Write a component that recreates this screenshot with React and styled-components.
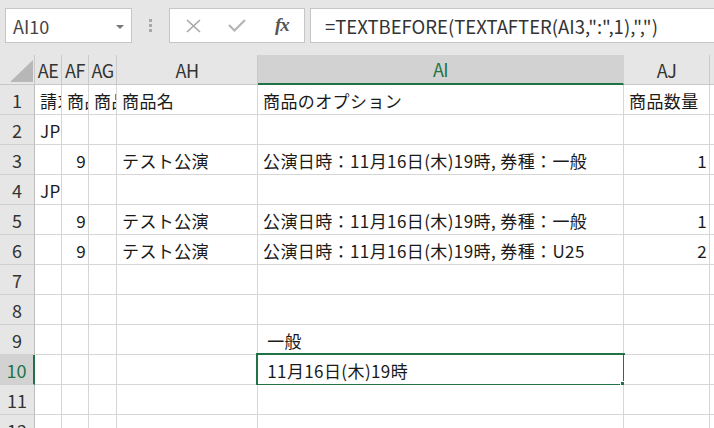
import React from 'react';
import styled, { createGlobalStyle } from 'styled-components';

const GlobalStyle = createGlobalStyle`
  html, body {
    margin: 0;
    padding: 0;
    background: #ffffff;
  }
  body {
    font-family: 'Noto Sans CJK JP', 'Noto Sans', sans-serif;
  }
`;

const GREEN = '#217346';
const GRID = '#d6d6d6';

const Window = styled.div`
  width: 714px;
  height: 428px;
  overflow: hidden;
  display: flex;
  flex-direction: column;
  background: #e6e6e6;
`;

// name box + formula bar
const Toolbar = styled.div`
  height: 55px;
  flex: none;
  display: flex;
  align-items: flex-start;
  padding: 8px 0 0 5px;
  box-sizing: border-box;
`;

const Field = styled.div`
  height: 35px;
  box-sizing: border-box;
  background: #ffffff;
  border: 1px solid #c6c6c6;
  display: flex;
  align-items: center;
  flex: none;
`;

const NameBox = styled(Field)`
  width: 127px;
  padding: 0 7px 0 7px;
  justify-content: space-between;
  font-size: 18px;
  color: #444;
`;

const DropArrow = styled.span`
  width: 0;
  height: 0;
  border-left: 4px solid transparent;
  border-right: 4px solid transparent;
  border-top: 4px solid #777;
  margin-top: 2px;
`;

const Grip = styled.div`
  width: 37px;
  height: 35px;
  flex: none;
  display: flex;
  flex-direction: column;
  align-items: center;
  justify-content: center;
  gap: 2px;

  span {
    width: 3px;
    height: 3px;
    background: #a8a8a8;
  }
`;

const ButtonBox = styled(Field)`
  width: 136px;
  padding-left: 1px;
`;

const ToolButton = styled.div`
  width: 45px;
  height: 100%;
  display: flex;
  align-items: center;
  justify-content: center;
  color: ${(p) => p.$color || '#a6a6a6'};
`;

const Fx = styled.span`
  font-family: 'Liberation Serif', 'DejaVu Serif', serif;
  font-style: italic;
  font-weight: bold;
  font-size: 19px;
  color: #555;
  letter-spacing: -1px;
  margin-top: -1px;
`;

const FormulaInput = styled(Field)`
  flex: 1;
  margin-left: 5px;
  padding-left: 14px;
  font-size: 18.5px;
  color: #333;
  white-space: pre;
  border-right: none;
`;

// worksheet grid
const Sheet = styled.div`
  flex: 1;
  display: grid;
  grid-template-columns: 35px 27px 27px 28px 141px 366px 86px 1fr;
  grid-auto-rows: 30px;
  overflow: hidden;
  font-size: 17px;
`;

const Corner = styled.div`
  position: relative;
  border-right: 1px solid #c8c8c8;
  border-bottom: 1px solid #c8c8c8;
  background: #e6e6e6;

  &::after {
    content: '';
    position: absolute;
    right: 1px;
    bottom: 2px;
    width: 0;
    height: 0;
    border-left: 23px solid transparent;
    border-bottom: 22px solid #b7b7b7;
  }
`;

const ColHead = styled.div`
  box-sizing: border-box;
  display: flex;
  align-items: center;
  justify-content: center;
  overflow: hidden;
  white-space: nowrap;
  font-size: 18px;
  background: ${(p) => (p.$active ? '#d2d2d2' : '#e6e6e6')};
  color: ${(p) => (p.$active ? GREEN : '#333')};
  border-right: 1px solid ${(p) => (p.$active ? '#d2d2d2' : '#cacaca')};
  border-bottom: ${(p) => (p.$active ? `2px solid ${GREEN}` : '1px solid #c8c8c8')};
  letter-spacing: -0.5px;
`;

const RowHead = styled.div`
  box-sizing: border-box;
  display: flex;
  align-items: center;
  justify-content: center;
  font-size: 18px;
  background: ${(p) => (p.$active ? '#d2d2d2' : '#e6e6e6')};
  color: ${(p) => (p.$active ? GREEN : '#333')};
  border-right: ${(p) => (p.$active ? `2px solid ${GREEN}` : '1px solid #bdbdbd')};
  border-bottom: 1px solid #d0d0d0;
`;

const Cell = styled.div`
  position: relative;
  box-sizing: border-box;
  display: flex;
  align-items: center;
  justify-content: ${(p) => (p.$right ? 'flex-end' : 'flex-start')};
  padding: 1px ${(p) => (p.$right ? '2px' : '5px')} 0 5px;
  border-right: 1px solid ${GRID};
  border-bottom: 1px solid ${GRID};
  background: #ffffff;
  color: #1a1a1a;
  white-space: pre;
  overflow: ${(p) => (p.$active ? 'visible' : 'hidden')};
  letter-spacing: 0.4px;
`;

const Selection = styled.div`
  position: absolute;
  top: -2px;
  left: -2px;
  right: -2px;
  bottom: -2px;
  border: 2px solid ${GREEN};
  pointer-events: none;

  &::after {
    content: '';
    position: absolute;
    right: -4px;
    bottom: -4px;
    width: 5px;
    height: 5px;
    background: ${GREEN};
    border: 1px solid #ffffff;
  }
`;

const COLUMNS = ['AE', 'AF', 'AG', 'AH', 'AI', 'AJ', 'AK'];
const ACTIVE_COL = 'AI';
const ACTIVE_ROW = 10;

const option = (kind) => `公演日時：11月16日(木)19時, 券種：${kind}`;

// narrow columns clip their header text at the cell edge
const rows = [
  { AE: '請求', AF: '商品', AG: '商品', AH: '商品名', AI: '商品のオプション', AJ: '商品数量' },
  { AE: 'JP' },
  { AF: 9, AH: 'テスト公演', AI: option('一般'), AJ: 1 },
  { AE: 'JP' },
  { AF: 9, AH: 'テスト公演', AI: option('一般'), AJ: 1 },
  { AF: 9, AH: 'テスト公演', AI: option('U25'), AJ: 2 },
  {},
  {},
  { AI: ' 一般' },
  { AI: ' 11月16日(木)19時' },
  {},
  {},
];

const CrossIcon = () => (
  <svg width="15" height="14" viewBox="0 0 15 14">
    <path d="M1 1 L14 13 M14 1 L1 13" stroke="currentColor" strokeWidth="1.6" fill="none" />
  </svg>
);

const CheckIcon = () => (
  <svg width="18" height="13" viewBox="0 0 18 13">
    <path d="M1 6 L6.5 11.5 L17 1" stroke="currentColor" strokeWidth="2.2" fill="none" />
  </svg>
);

const App = () => (
  <>
    <GlobalStyle />
    <Window>
      <Toolbar>
        <NameBox>
          AI10
          <DropArrow />
        </NameBox>
        <Grip>
          <span />
          <span />
          <span />
        </Grip>
        <ButtonBox>
          <ToolButton>
            <CrossIcon />
          </ToolButton>
          <ToolButton $color="#b5b5b5">
            <CheckIcon />
          </ToolButton>
          <ToolButton>
            <Fx>fx</Fx>
          </ToolButton>
        </ButtonBox>
        <FormulaInput>{'=TEXTBEFORE(TEXTAFTER(AI3,":",1),",")'}</FormulaInput>
      </Toolbar>

      <Sheet>
        <Corner />
        {COLUMNS.map((c) => (
          <ColHead key={c} $active={c === ACTIVE_COL}>
            {c === 'AK' ? '' : c}
          </ColHead>
        ))}
        {rows.map((row, i) => {
          const n = i + 1;
          return (
            <React.Fragment key={n}>
              <RowHead $active={n === ACTIVE_ROW}>{n}</RowHead>
              {COLUMNS.map((c) => {
                const v = row[c];
                const active = n === ACTIVE_ROW && c === ACTIVE_COL;
                return (
                  <Cell key={c} $right={typeof v === 'number'} $active={active}>
                    {v}
                    {active && <Selection />}
                  </Cell>
                );
              })}
            </React.Fragment>
          );
        })}
      </Sheet>
    </Window>
  </>
);

export default App;
